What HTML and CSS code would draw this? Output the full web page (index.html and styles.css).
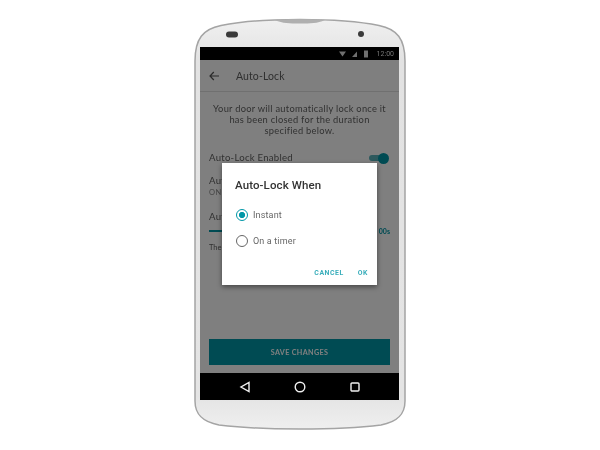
FILE: index.html
```html
<!DOCTYPE html>
<html lang="en">
<head>
<meta charset="utf-8">
<title>Auto-Lock</title>
<link rel="stylesheet" href="styles.css">
</head>
<body>
<main class="phone">
  <svg class="phone-shell" width="214" height="414" viewBox="0 0 214 414" aria-hidden="true">
    <defs>
      <linearGradient id="shell-fill" x1="0" y1="0" x2="0" y2="1">
        <stop offset="0" stop-color="#f0f0f0"/>
        <stop offset="0.1" stop-color="#e2e2e2"/>
        <stop offset="0.92" stop-color="#e4e4e4"/>
        <stop offset="1" stop-color="#efefef"/>
      </linearGradient>
    </defs>
    <path class="shell-edge" d="M2 44C2 22 10 12 28 8.500C50 4 78 2.500 107 2.500C136 2.500 164 4 186 8.500C204 12 212 22 212 44V384C212 398 204 405 188 408C164 411 136 412 107 412C78 412 50 411 26 408C10 405 2 398 2 384Z"/>
    <path class="shell-notch" d="M82 3C90 6.500 96 6.500 107 6.500C118 6.500 124 6.500 132 3C122 2 92 2 82 3Z"/>
    <rect class="shell-speaker" x="33" y="14.500" width="12" height="6" rx="3"/>
    <circle class="shell-camera" cx="168" cy="17" r="3"/>
  </svg>
  <div class="screen">
    <div class="status-bar">
      <svg class="status-icons" width="34" height="8" viewBox="0 0 34 8" aria-hidden="true">
        <path d="M0 1.500H7L3.500 6.500Z"/>
        <path d="M13 7L18 1.500V7Z"/>
        <rect x="25" y="0.500" width="4" height="7"/>
      </svg>
      <span class="clock">12:00</span>
    </div>
    <header class="app-bar">
      <svg class="back" width="12" height="10" viewBox="0 0 12 10" aria-hidden="true"><path d="M10 5H1M4.800 1L1 5L4.800 9"/></svg>
      <h1 class="app-title">Auto-Lock</h1>
    </header>
    <div class="content">
      <p class="intro">Your door will automatically lock once it has been closed for the duration specified below.</p>
      <div class="row-enabled">
        <span class="row-label">Auto-Lock Enabled</span>
        <span class="toggle"><span class="toggle-track"></span><span class="toggle-thumb"></span></span>
      </div>
      <div class="row-when">
        <span class="row-label">Aut</span>
        <span class="row-sub">ON</span>
      </div>
      <div class="row-timer">
        <span class="row-label">Aut</span>
        <div class="slider"><span class="slider-line"></span><span class="slider-value">00s</span></div>
        <span class="row-note">The</span>
      </div>
      <button class="save" type="button">SAVE CHANGES</button>
    </div>
    <nav class="nav-bar">
      <svg width="12" height="12" viewBox="0 0 12 12" aria-hidden="true"><path d="M10 1.500V10.500L2 6Z"/></svg>
      <svg width="12" height="12" viewBox="0 0 12 12" aria-hidden="true"><circle cx="6" cy="6" r="4.800"/></svg>
      <svg width="12" height="12" viewBox="0 0 12 12" aria-hidden="true"><rect x="2" y="2" width="8" height="8" rx="1"/></svg>
    </nav>
    <div class="scrim"></div>
    <section class="dialog">
      <h2 class="dialog-title">Auto-Lock When</h2>
      <div class="options">
        <label class="option"><span class="radio radio-on"></span>Instant</label>
        <label class="option"><span class="radio"></span>On a timer</label>
      </div>
      <div class="actions"><span class="action">CANCEL</span><span class="action">OK</span></div>
    </section>
  </div>
</main>
</body>
</html>
```
FILE: styles.css
```css
html, body { margin: 0; padding: 0; background: #fff; }
body { width: 600px; height: 450px; overflow: hidden; font-family: Lato, "Liberation Sans", sans-serif; }
.phone { position: relative; box-sizing: border-box; width: 214px; height: 414px; margin: 17px 0 0 193px; padding: 30px 0 0 7px; filter: blur(0.4px); }
.phone-shell { position: absolute; left: 0; top: 0; }
.shell-edge { fill: url(#shell-fill); stroke: #a4a4a4; stroke-width: 1.5; }
.shell-notch { fill: #b0b0b0; }
.shell-speaker, .shell-camera { fill: #3a3a3a; }
.screen { position: relative; width: 199px; height: 353px; display: flex; flex-direction: column; background: #fff; }
.status-bar { height: 13px; flex: none; background: #000; display: flex; align-items: center; justify-content: flex-end; gap: 4px; padding-right: 5px; }
.status-icons { fill: #6f6f6f; }
.clock { font: 7px "Roboto", sans-serif; color: #777; }
.app-bar { height: 32px; flex: none; box-sizing: border-box; display: flex; align-items: center; padding-left: 9px; border-bottom: 1px solid #e0e0e0; }
.back { fill: none; stroke: #555; stroke-width: 1.2; }
.app-title { margin: 0 0 0 15px; font-size: 10.5px; font-weight: 400; color: #606060; letter-spacing: 0.1px; }
.content { flex: 1; display: flex; flex-direction: column; padding: 0 9px; min-height: 0; }
.intro { margin: 12px 0 0; font-size: 9.3px; line-height: 10.8px; text-align: center; color: #636363; letter-spacing: 0.28px; }
.row-enabled { display: flex; justify-content: space-between; align-items: center; margin-top: 14px; height: 14px; }
.row-label { font-size: 9.6px; color: #636363; letter-spacing: 0.25px; }
.toggle { position: relative; top: 1px; width: 20px; height: 12px; margin-right: 1px; }
.toggle-track { position: absolute; left: 0; right: 2px; top: 3px; height: 6px; border-radius: 3px; background: #5ab3bb; }
.toggle-thumb { position: absolute; right: 0; top: 1px; width: 11px; height: 11px; border-radius: 50%; background: #0097a7; }
.row-when { display: flex; flex-direction: column; margin-top: 11px; gap: 2px; }
.row-sub { font-size: 7.5px; color: #8a8a8a; letter-spacing: 0.4px; height: 10px; }
.row-timer { display: flex; flex-direction: column; margin-top: 13px; }
.slider { display: flex; align-items: center; height: 11px; margin-top: 3px; }
.slider-line { width: 13px; height: 1.5px; background: #0097a7; }
.slider-value { margin-left: auto; font-size: 7px; color: #0097a7; font-weight: 700; }
.row-note { font-size: 7.5px; color: #636363; margin-top: 7px; }
.save { margin-top: auto; margin-bottom: 8px; height: 26px; flex: none; border: 0; padding: 0; background: #0097a7; color: #fff; font: 700 7.2px Lato, sans-serif; letter-spacing: 0.35px; }
.scrim { position: absolute; left: 0; right: 0; top: 13px; bottom: 27px; background: rgba(0, 0, 0, 0.5); }
.dialog { position: absolute; left: 22px; top: 116px; width: 155px; height: 122px; box-sizing: border-box; padding: 16px 13px 0; display: flex; flex-direction: column; background: #fff; box-shadow: 0 2px 5px rgba(0, 0, 0, 0.45); }
.dialog-title { margin: 0; font: 500 11.5px/13px Roboto, sans-serif; color: #333; letter-spacing: 0.1px; }
.options { margin-top: 16px; display: flex; flex-direction: column; gap: 13px; }
.option { display: flex; align-items: center; gap: 5px; height: 13px; margin-left: 1px; font: 400 9px Roboto, sans-serif; color: #666; letter-spacing: 0.15px; }
.radio { width: 12px; height: 12px; box-sizing: border-box; border: 1.3px solid #666; border-radius: 50%; background: #fff; }
.radio-on { border-color: #0097a7; background: radial-gradient(circle, #0097a7 0 2.8px, #fff 3.3px); }
.actions { margin-top: 22px; display: flex; justify-content: flex-end; gap: 14px; margin-right: -4px; }
.action { font: 700 6.9px Roboto, sans-serif; color: #3aaebb; letter-spacing: 0.55px; }
.nav-bar { height: 27px; flex: none; background: #000; display: flex; align-items: center; justify-content: center; gap: 43px; }
.nav-bar svg { fill: none; stroke: #f0f0f0; stroke-width: 1.4; }
```
